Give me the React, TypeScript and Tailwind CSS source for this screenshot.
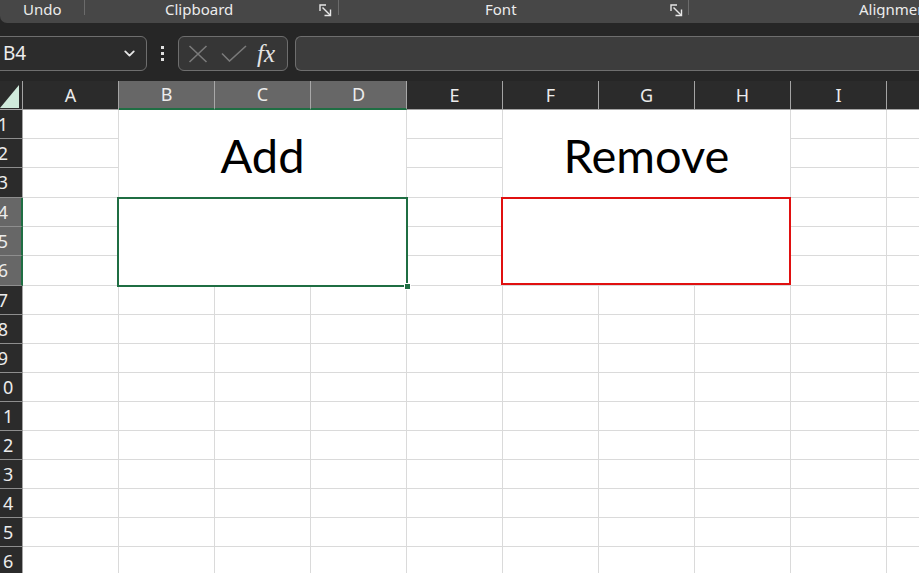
import { ChevronDown } from 'lucide-react';

const COLS = ['A', 'B', 'C', 'D', 'E', 'F', 'G', 'H', 'I', 'J'];
const ROWS = Array.from({ length: 16 }, (_, i) => i + 1);
const SELECTED_COLS = [1, 2, 3];
const SELECTED_ROWS = [4, 5, 6];

const GREEN = 'border-[#1f6e43]';

// merged blocks: top-left row/col, 3x3 each
const MERGED = [
  { r: 1, c: 1, kind: 'add' },
  { r: 1, c: 5, kind: 'remove' },
  { r: 4, c: 1, kind: 'sel' },
  { r: 4, c: 5, kind: 'red' },
];

function mergedAt(r: number, c: number) {
  return MERGED.find(m => m.r === r && m.c === c);
}

function covered(r: number, c: number) {
  return MERGED.some(m => r >= m.r && r < m.r + 3 && c >= m.c && c < m.c + 3);
}

function Launcher() {
  return (
    <svg width="13" height="13" viewBox="0 0 13 13" fill="none" stroke="#e6e6e6" strokeWidth="1.4">
      <path d="M1 7V1h6" />
      <path d="M3.5 3.5l7.5 7.5" />
      <path d="M11.5 5.5v6h-6" />
    </svg>
  );
}

function Ribbon() {
  return (
    <div
      className="h-[23px] bg-[#474747] rounded-bl-[7px] flex items-start text-[15px] leading-[18px] text-[#ececec]"
      style={{ fontFamily: '"Noto Sans", sans-serif' }}
    >
      <div className="w-[84px] pl-[23px]">Undo</div>
      <div className="w-px h-[15px] bg-[#6b6b6b]" />
      <div className="w-[253px] flex items-start pl-[80px]">
        <span>Clipboard</span>
        <span className="ml-auto mr-[6px] mt-[4px]">
          <Launcher />
        </span>
      </div>
      <div className="w-px h-[15px] bg-[#6b6b6b]" />
      <div className="w-[349px] flex items-start pl-[146px]">
        <span>Font</span>
        <span className="ml-auto mr-[5px] mt-[4px]">
          <Launcher />
        </span>
      </div>
      <div className="w-px h-[15px] bg-[#6b6b6b]" />
      <div className="flex-1 pl-[170px] whitespace-nowrap overflow-hidden">Alignment</div>
    </div>
  );
}

function FormulaBar() {
  return (
    <div className="mt-[13px] h-[35px] flex items-stretch" style={{ fontFamily: '"Noto Sans", sans-serif' }}>
      <div className="-ml-[8px] w-[155px] rounded-[6px] border border-[#6e6e6e] bg-[#2c2c2c] flex items-center pl-[10px] pr-[8px] text-[19px] text-[#ededed]">
        <span>B4</span>
        <ChevronDown size={17} strokeWidth={2.6} className="ml-auto text-[#e6e6e6]" />
      </div>
      <div className="w-[31px] flex flex-col items-center justify-center gap-[3px]">
        <div className="w-[3px] h-[3px] bg-[#e0e0e0]" />
        <div className="w-[3px] h-[3px] bg-[#e0e0e0]" />
        <div className="w-[3px] h-[3px] bg-[#e0e0e0]" />
      </div>
      <div className="w-[110px] rounded-[6px] border border-[#6e6e6e] bg-[#363636] flex items-center">
        <svg width="20" height="18" viewBox="0 0 20 18" className="ml-[9px]" fill="none" stroke="#7a7a7a" strokeWidth="1.6">
          <path d="M1.5 1l17 16M18.5 1l-17 16" />
        </svg>
        <svg width="26" height="17" viewBox="0 0 26 17" className="ml-[13px]" fill="none" stroke="#7a7a7a" strokeWidth="1.6">
          <path d="M1 8.5l7.5 7.5L25 1" />
        </svg>
        <span
          className="ml-[10px] text-[25px] italic text-[#e4e4e4] leading-none"
          style={{ fontFamily: '"Liberation Serif", serif' }}
        >
          fx
        </span>
      </div>
      <div className="ml-[7px] flex-1 rounded-l-[6px] border border-r-0 border-[#6e6e6e] bg-[#3d3d3d]" />
    </div>
  );
}

function MergedCell({ kind }: { kind: string }) {
  return (
    <div className="col-span-3 row-span-3 relative bg-white border-r border-b border-[#dadada] flex items-center justify-center">
      {kind === 'add' && (
        <span className="text-[47px] text-black leading-none pt-[3px]" style={{ fontFamily: 'Lato, sans-serif' }}>
          Add
        </span>
      )}
      {kind === 'remove' && (
        <span className="text-[47px] text-black leading-none pt-[3px]" style={{ fontFamily: 'Lato, sans-serif' }}>
          Remove
        </span>
      )}
      {kind === 'sel' && (
        <div className={`absolute -left-[2px] -top-[1px] -right-[2px] -bottom-[2px] border-2 ${GREEN}`}>
          <div className="absolute -right-[5px] -bottom-[5px] w-[7px] h-[7px] bg-[#1f6e43] border border-white" />
        </div>
      )}
      {kind === 'red' && (
        <div className="absolute -left-[2px] -top-[1px] -right-[1px] bottom-0 border-2 border-[#e01010]" />
      )}
    </div>
  );
}

function Sheet() {
  return (
    <div
      className="mt-[10px] grid grid-cols-[23px_repeat(10,96px)] grid-rows-[29px_29px_29px_30px_29px_29px_30px_repeat(10,29px)]"
      style={{ fontFamily: '"Noto Sans", sans-serif' }}
    >
      {/* corner */}
      <div className="bg-[#2b2b2b] border-r border-b border-[#a4a4a4] relative">
        <svg width="20" height="23" viewBox="0 0 20 23" className="absolute left-0 top-[4px]">
          <path d="M19 0V23H0Z" fill="#cfeadb" />
        </svg>
      </div>

      {COLS.map((col, c) => {
        const sel = SELECTED_COLS.includes(c);
        return (
          <div
            key={col}
            className={`flex items-center justify-center text-[18px] text-[#ececec] border-r ${
              sel
                ? `bg-[#676767] border-r-[#a8a8a8] border-b-2 ${GREEN}`
                : 'bg-[#2b2b2b] border-r-[#a4a4a4] border-b border-b-[#a4a4a4]'
            }`}
          >
            {col}
          </div>
        );
      })}

      {ROWS.map(r => {
        const sel = SELECTED_ROWS.includes(r);
        return [
          <div
            key={`h${r}`}
            className={`flex overflow-hidden text-[18px] text-[#ececec] border-b border-b-[#8e8e8e] ${
              sel ? `bg-[#676767] border-r-2 ${GREEN}` : 'bg-[#2b2b2b] border-r border-r-[#a4a4a4]'
            }`}
          >
            <span className="w-[40px] -ml-[17px] shrink-0 text-center self-center">{r}</span>
          </div>,
          ...COLS.map((col, c) => {
            const m = mergedAt(r, c);
            if (m) return <MergedCell key={`${col}${r}`} kind={m.kind} />;
            if (covered(r, c)) return null;
            return <div key={`${col}${r}`} className="bg-white border-r border-b border-[#dadada]" />;
          }),
        ];
      })}
    </div>
  );
}

export default function App() {
  return (
    <div className="w-[919px] h-[573px] overflow-hidden bg-[#262626]">
      <Ribbon />
      <FormulaBar />
      <Sheet />
    </div>
  );
}
